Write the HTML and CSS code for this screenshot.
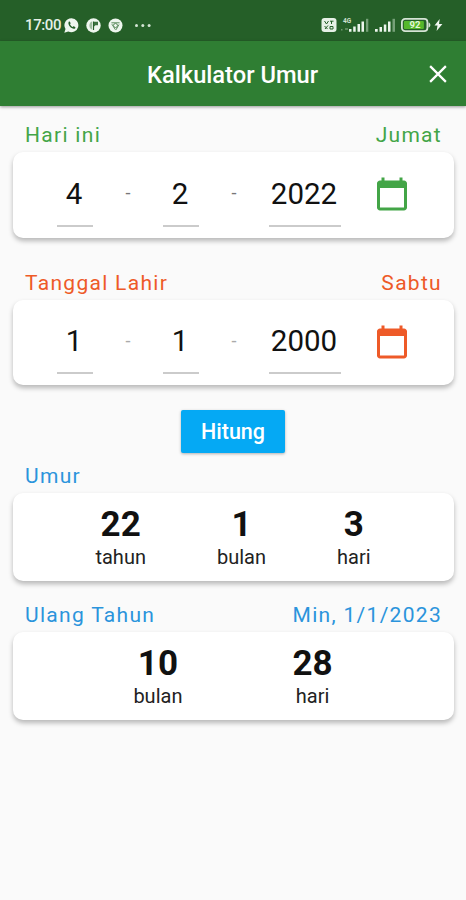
FILE: index.html
```html
<!DOCTYPE html>
<html lang="id">
<head>
  <meta charset="UTF-8">
  <meta name="viewport" content="width=device-width, initial-scale=1.0">
  <title>Kalkulator Umur</title>
  <link rel="stylesheet" href="styles.css">
</head>
<body>
  <div class="status-bar">
    <span class="clock">17:00</span>
    <div class="notifications">
      <svg width="15" height="15" viewBox="0 0 15 15">
        <path d="M7.6 0.2a7 7 0 1 1-3.3 13.3L0.3 14.7l1.2-3.8A7 7 0 0 1 7.6 0.2z" fill="#eef6ee"/>
        <path d="M4.6 4.1c.6-.8 1.3-.6 1.6.2l.4 1c.1.5-.7.9-.5 1.3.6 1.1 1.4 1.8 2.4 2.3.5.2.8-.8 1.3-.6l1.3.6c.7.4.2 1.5-.5 1.8-2.5.9-7.2-3.3-6-6.6z" fill="#255f28"/>
      </svg>
      <svg width="15" height="15" viewBox="0 0 15 15">
        <circle cx="7.5" cy="7.5" r="7.2" fill="#eef6ee"/>
        <path d="M6 3.5C2.5 4.5 2.5 10.5 6 11.5z" fill="#9dbb9e"/>
        <path d="M7.5 3.5v8.5" fill="none" stroke="#255f28" stroke-width="1.2"/>
        <path d="M8 3.7h4v3.6H9.5L8 8.5z" fill="#3c713f"/>
      </svg>
      <svg width="15" height="15" viewBox="0 0 15 15">
        <circle cx="7.5" cy="7.5" r="7" fill="#eef6ee"/>
        <path d="M3.4 4.8h8.2M3.9 6.2l3.5 5.5M11 6.5l-3 5.3" fill="none" stroke="#5c8c5e" stroke-width="1"/>
        <circle cx="7.5" cy="7.5" r="2" fill="#eef6ee" stroke="#5c8c5e"/>
      </svg>
    </div>
    <svg class="more" width="16" height="3" viewBox="0 0 16 3" fill="#d5e5d5">
      <circle cx="1.5" cy="1.5" r="1.5"/>
      <circle cx="7.8" cy="1.5" r="1.5"/>
      <circle cx="14.1" cy="1.5" r="1.5"/>
    </svg>
    <div class="system">
      <svg width="16" height="14" viewBox="0 0 16 14">
        <rect x="0.5" width="15" height="14" rx="3" fill="#e6f0e6"/>
        <path d="M3.5 3l2 3 2-3M9 3.2h3.5M10.5 3v3M3.5 8l3 3M7 7.5l-3 3.5M9 8.5h3v2.5H9z" fill="none" stroke="#255f28" stroke-width="1"/>
      </svg>
      <svg class="signal-4g" width="28" height="14" viewBox="0 0 28 14">
        <text x="2" y="4.8" class="network">4G</text>
        <path d="M0 11.8h1.5M4 11h3" stroke="#6f986f" stroke-width="1.5"/>
        <path d="M8 11h2.5v2.8H8zM12.2 8.5h2.5v5.3h-2.5zM16.5 6H19v7.800h-2.5zM20.5 3.5H23v10.3h-2.5z" fill="#edf5ed"/>
        <path d="M25 .8h2.3v13H25z" fill="#76a078"/>
      </svg>
      <svg class="signal" width="21" height="14" viewBox="0 0 21 14">
        <path d="M0 11h2.7v2.8H0zM4.5 9H7v4.8H4.5zM8.8 6.5h2.5v7.3H8.8zM13 3.5h2.5v10.3H13z" fill="#edf5ed"/>
        <path d="M17.5.8h2.5v13h-2.5z" fill="#76a078"/>
      </svg>
      <svg class="battery" width="30" height="14" viewBox="0 0 30 14">
        <rect x="0.9" y="0.9" width="25.5" height="12.2" rx="3.2" fill="#255f28" stroke="#d5e3d5" stroke-width="1.8"/>
        <rect x="2.9" y="2.9" width="20" height="8.2" rx="1" fill="#55b72b"/>
        <path d="M27.5 4.5c2.5.5 2.5 4.5 0 5z" fill="#d5e3d5"/>
        <text x="8.5" y="10.300" class="charge">92</text>
      </svg>
      <svg width="9" height="12" viewBox="0 0 9 12">
        <path d="M5.7 0L.5 6.6h3L2.6 12l5.8-7H5z" fill="#f1f7f1"/>
      </svg>
    </div>
  </div>

  <header class="app-bar">
    <h1>Kalkulator Umur</h1>
    <svg class="close" width="18" height="18" viewBox="0 0 16 16">
      <path d="M1 1l14 14M15 1L1 15" stroke="#fff" stroke-width="2"/>
    </svg>
  </header>

  <main class="container">
    <section class="today">
      <div class="label"><span>Hari ini</span><span>Jumat</span></div>
      <div class="card date-card">
        <span class="field">4</span>
        <span class="dash">-</span>
        <span class="field">2</span>
        <span class="dash">-</span>
        <span class="field year">2022</span>
        <svg class="calendar" width="36" height="36" viewBox="0 0 24 24">
          <path d="M20 3h-1V1h-2v2H7V1H5v2H4c-1.1 0-2 .9-2 2v16c0 1.1.9 2 2 2h16c1.1 0 2-.9 2-2V5c0-1.1-.9-2-2-2zm0 18H4V8h16v13z"/>
        </svg>
      </div>
    </section>

    <section class="birth">
      <div class="label"><span>Tanggal Lahir</span><span>Sabtu</span></div>
      <div class="card date-card">
        <span class="field">1</span>
        <span class="dash">-</span>
        <span class="field">1</span>
        <span class="dash">-</span>
        <span class="field year">2000</span>
        <svg class="calendar" width="36" height="36" viewBox="0 0 24 24">
          <path d="M20 3h-1V1h-2v2H7V1H5v2H4c-1.1 0-2 .9-2 2v16c0 1.1.9 2 2 2h16c1.1 0 2-.9 2-2V5c0-1.1-.9-2-2-2zm0 18H4V8h16v13z"/>
        </svg>
      </div>
    </section>

    <button class="primary-btn">Hitung</button>

    <section class="age">
      <div class="label"><span>Umur</span></div>
      <div class="card result-card">
        <div class="result"><strong>22</strong><span>tahun</span></div>
        <div class="result"><strong>1</strong><span>bulan</span></div>
        <div class="result"><strong>3</strong><span>hari</span></div>
      </div>
    </section>

    <section class="birthday">
      <div class="label"><span>Ulang Tahun</span><span>Min, 1/1/2023</span></div>
      <div class="card result-card">
        <div class="result"><strong>10</strong><span>bulan</span></div>
        <div class="result"><strong>28</strong><span>hari</span></div>
      </div>
    </section>
  </main>
</body>
</html>
```
FILE: styles.css
```css
/* Base Styles */
* {
  box-sizing: border-box;
}

body {
  font-family: Roboto, sans-serif;
  background-color: #fafafa;
  color: #111;
  margin: 0;
  min-height: 900px;
}

svg {
  display: block;
  flex: none;
}

/* Status Bar */
.status-bar {
  display: flex;
  align-items: center;
  height: 41px;
  padding: 9px 23px 0 25px;
  background-color: #255f28;
  color: #e6f0e6;
}

.clock {
  width: 39px;
  font-size: 15px;
  font-weight: 500;
  letter-spacing: -0.4px;
}

.notifications {
  display: flex;
  gap: 7px;
}

.more {
  margin-left: 12px;
}

.system {
  display: flex;
  align-items: center;
  margin-left: auto;
}

.signal-4g {
  margin-left: 4px;
}

.signal {
  margin-left: 6px;
}

.battery {
  margin: 0 3px 0 5px;
}

.network {
  font-size: 6.5px;
  font-weight: 700;
  fill: #cfe0cf;
}

.charge {
  font-size: 9.5px;
  font-weight: 700;
  fill: #e4f5dc;
}

/* App Bar */
.app-bar {
  display: flex;
  align-items: center;
  position: relative;
  height: 65px;
  padding: 0 19px 0 147px;
  background-color: #2f7e33;
  box-shadow: 0 1px 3px rgba(0, 0, 0, 0.4);
  color: #fff;
}

.app-bar h1 {
  margin: 2px 0 0;
  font-size: 23.7px;
  font-weight: 500;
}

.close {
  margin-left: auto;
}

/* Content */
.container {
  display: flex;
  flex-direction: column;
  padding: 15px 12px 0 13px;
}

.label {
  display: flex;
  justify-content: space-between;
  height: 31px;
  padding: 0 12px;
  font-size: 21px;
  line-height: 29px;
  letter-spacing: 1.3px;
}

.card {
  display: flex;
  background: #fff;
  border-radius: 10px;
  box-shadow: 0 3px 5px rgba(0, 0, 0, 0.27);
}

/* Date Cards */
.date-card {
  align-items: center;
  height: 85.5px;
  padding-left: 44px;
}

.field {
  width: 36px;
  height: 64px;
  padding-right: 2px;
  border-bottom: 2px solid #cbcbcb;
  font-size: 29.5px;
  line-height: 62px;
  text-align: center;
}

.year {
  width: 72px;
}

.dash {
  width: 70px;
  margin-bottom: 4px;
  font-size: 18px;
  text-align: center;
  color: #777;
}

.calendar {
  margin: 0 0 1px 33px;
  fill: currentColor;
}

.today .label,
.today .calendar {
  color: #43a547;
}

.birth {
  margin-top: 31px;
}

.birth .label,
.birth .calendar {
  color: #ee5a28;
}

.birth .dash {
  color: #aaa;
}

/* Button */
.primary-btn {
  align-self: center;
  width: 104px;
  height: 43px;
  margin: 25px 1px 9px 0;
  padding: 0;
  border: none;
  border-radius: 2px;
  background-color: #05a9f4;
  box-shadow: 0 1px 3px rgba(0, 0, 0, 0.3);
  color: #fff;
  font-family: inherit;
  font-size: 21.5px;
  font-weight: 500;
}

/* Results */
.age .label,
.birthday .label {
  color: #2b94dc;
}

.birthday {
  margin-top: 20px;
}

.result-card {
  justify-content: center;
  gap: 71px;
  height: 88px;
  padding: 11px 1px 0 0;
}

.birthday .result-card {
  gap: 110px;
}

.result {
  display: flex;
  flex-direction: column;
  align-items: center;
}

.result strong {
  font-size: 35px;
  line-height: 41px;
}

.result span {
  font-size: 20px;
  line-height: 25px;
  color: #222;
}
```
